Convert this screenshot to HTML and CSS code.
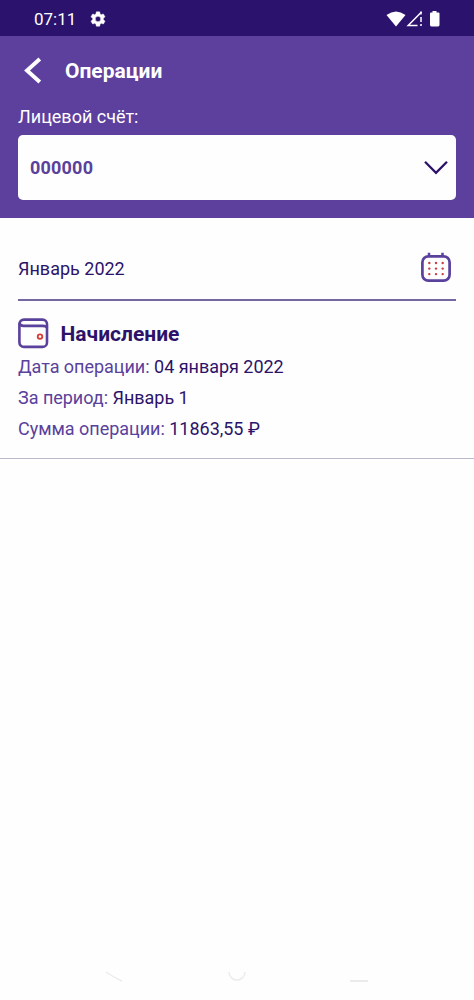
FILE: index.html
```html
<!DOCTYPE html>
<html lang="ru">
<head>
<meta charset="utf-8">
<title>Операции</title>
<link rel="stylesheet" href="styles.css">
</head>
<body>
<div class="status">
  <span class="clock">07:11</span>
  <svg class="gear" width="18" height="18" viewBox="0 0 24 24"><path fill="#fff" stroke="#fff" stroke-width=".6" d="M19.14 12.94c.04-.3.06-.61.06-.94s-.02-.64-.07-.94l2.03-1.58a.49.49 0 0 0 .12-.61l-1.92-3.32a.49.49 0 0 0-.59-.22l-2.39.96a7 7 0 0 0-1.62-.94l-.36-2.54a.48.48 0 0 0-.48-.41h-3.84a.47.47 0 0 0-.47.41l-.36 2.54c-.59.24-1.13.57-1.62.94l-2.39-.96a.48.48 0 0 0-.59.22L2.74 8.87a.47.47 0 0 0 .12.61l2.03 1.58a6 6 0 0 0 0 1.88l-2.03 1.58a.49.49 0 0 0-.12.61l1.92 3.32c.12.22.37.29.59.22l2.39-.96c.5.38 1.03.7 1.62.94l.36 2.54c.05.24.24.41.48.41h3.84c.24 0 .44-.17.47-.41l.36-2.54a7 7 0 0 0 1.62-.94l2.39.96c.22.08.47 0 .59-.22l1.92-3.32a.47.47 0 0 0-.12-.61zM12 15.600A3.600 3.600 0 1 1 12 8.400a3.600 3.600 0 0 1 0 7.200z"/></svg>
  <svg class="signals" width="56" height="20" viewBox="0 0 56 20"><path fill="#fff" d="M.5 5Q10-2 19.500 5L10 16.500Z"/><path fill="none" stroke="#fff" stroke-width="1.500" d="M35.500 2 22.200 15.400h9.300"/><path stroke="#fff" stroke-width="1.500" d="M35 1.500v3M35 7v5M35 14v2"/><path fill="#fff" d="M46.500 1h4v1.500h2q1 0 1 1V15q0 1.400-1.400 1.400h-6.700Q44 16.400 44 15V3.500q0-1 1-1h1.500Z"/></svg>
</div>
<header class="header">
  <div class="bar">
    <svg width="18" height="28" viewBox="0 0 18 28"><path d="M15.800 2 3 13.500l12.800 11.500" fill="none" stroke="#fff" stroke-width="3.900"/></svg>
    <h1 class="title">Операции</h1>
  </div>
  <div class="label">Лицевой счёт:</div>
  <div class="select">
    <span class="account">000000</span>
    <svg width="26" height="16" viewBox="0 0 26 16"><path d="m2 2.800 11 11 11-11" fill="none" stroke="#2c1369" stroke-width="2.300"/></svg>
  </div>
</header>
<main>
  <div class="month">
    <span class="month-name">Январь 2022</span>
    <svg width="32" height="32" viewBox="0 0 32 32"><rect x="2.400" y="5.300" width="27.200" height="24.400" rx="6" fill="none" stroke="#5a419c" stroke-width="2.700"/><path d="M9 1.800v3M22.500 1.800v3" stroke="#5a419c" stroke-width="2.500"/><g fill="#c83e43"><circle cx="9.300" cy="12" r="1.200"/><circle cx="16" cy="12" r="1.200"/><circle cx="22.700" cy="12" r="1.200"/><circle cx="9.300" cy="17.600" r="1.200"/><circle cx="16" cy="17.600" r="1.200"/><circle cx="22.700" cy="17.600" r="1.200"/><circle cx="9.300" cy="23.100" r="1.200"/><circle cx="16" cy="23.100" r="1.200"/><circle cx="22.700" cy="23.100" r="1.200"/></g></svg>
  </div>
  <section class="operation">
    <div class="heading">
      <svg width="31" height="31" viewBox="0 0 31 31"><g fill="none" stroke="#5a419c" stroke-width="2.600"><rect x="1.400" y="1.600" width="27.600" height="27.300" rx="4.500"/><path d="M1.500 5Q2 7.900 5.500 7.900h19q4 0 4.500 2"/></g><circle cx="22" cy="18.600" r="2.300" fill="none" stroke="#d93c36" stroke-width="1.800"/></svg>
      <h2 class="name">Начисление</h2>
    </div>
    <div class="row">Дата операции: <span class="value">04 января 2022</span></div>
    <div class="row">За период: <span class="value">Январь 1</span></div>
    <div class="row">Сумма операции: <span class="value">11863,55 ₽</span></div>
  </section>
</main>
<footer class="nav">
  <svg width="18" height="12" viewBox="0 0 18 12"><path d="M1 1q9 6 16 9" fill="none" stroke="#ebebeb" stroke-width="1.500"/></svg>
  <svg width="18" height="12" viewBox="0 0 18 12"><path d="M1 1a8 8 0 0 0 16 0" fill="none" stroke="#ebebeb" stroke-width="1.500"/></svg>
  <svg width="18" height="12" viewBox="0 0 18 12"><path d="M0 10h18" stroke="#ebebeb" stroke-width="2"/></svg>
</footer>
</body>
</html>
```
FILE: styles.css
```css
* { box-sizing: border-box; }
body {
  margin: 0;
  height: 1000px;
  display: flex;
  flex-direction: column;
  background: #fefefe;
  color: #2c1369;
  font: 18px/30px Roboto, sans-serif;
}
svg { display: block; flex: none; }
.status {
  height: 36px;
  padding: 0 32px 0 34px;
  display: flex;
  align-items: center;
  background: #2b126d;
  color: #fff;
}
.clock { font-size: 17px; padding-top: 2px; }
.gear { margin: 2px 0 0 13px; }
.signals { margin: 3px 0 0 auto; }
.header {
  height: 181.500px;
  padding: 20px 18px 18px;
  background: #5d3f9e;
  color: #fff;
}
.bar { display: flex; align-items: center; gap: 23px; height: 30px; padding-left: 6px; }
.title { margin: 0; font-size: 21px; font-weight: 700; }
.label { margin-top: 16px; }
.select {
  margin-top: 2.500px;
  height: 65px;
  padding: 0 7px 0 12px;
  display: flex;
  align-items: center;
  justify-content: space-between;
  background: #fefefe;
  border-radius: 5px;
}
.account { color: #5a419c; font-weight: 700; letter-spacing: .2px; padding-top: 1.500px; }
.month {
  height: 83px;
  margin: 0 18px;
  padding: 18px 4px 0 0;
  display: flex;
  align-items: center;
  justify-content: space-between;
  border-bottom: 2px solid #7568a2;
}
.month-name { padding-top: 4px; }
.operation { height: 158.500px; padding: 17.500px 18px 0; border-bottom: 1px solid #bdb8cc; }
.heading { display: flex; align-items: center; gap: 11.500px; height: 31px; margin-bottom: 3px; }
.name { margin: 0; font-size: 21px; font-weight: 700; }
.row { height: 30.800px; color: #5a419c; letter-spacing: -.02px; }
.value { color: #2c1369; }
.nav { margin-top: auto; height: 29px; display: flex; justify-content: space-between; padding: 0 106px 0 105px; }
```
